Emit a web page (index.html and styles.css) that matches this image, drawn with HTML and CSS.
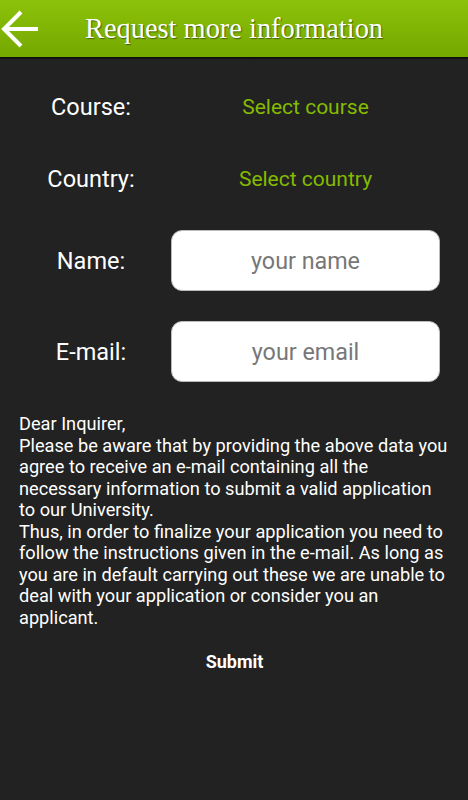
FILE: index.html
```html
<!DOCTYPE html>
<html lang="en">
<head>
    <meta charset="UTF-8">
    <link rel="stylesheet" href="styles.css">
    <title>Request more information</title>
</head>
<body>
    <header class="topbar">
        <a class="back" href="#">
            <svg width="40" height="40" viewBox="0 0 40 40">
                <path d="M38 20 H4 M21 3 L4 20 L21 37" fill="none" stroke="#fff" stroke-width="4"/>
            </svg>
        </a>
        <h1>Request more information</h1>
    </header>
    <main>
        <form class="request">
            <div class="row row-course">
                <label>Course:</label>
                <span class="select">Select course</span>
            </div>
            <div class="row row-country">
                <label>Country:</label>
                <span class="select">Select country</span>
            </div>
            <div class="row row-name">
                <label for="name">Name:</label>
                <input type="text" id="name" placeholder="your name">
            </div>
            <div class="row row-email">
                <label for="email">E-mail:</label>
                <input type="email" id="email" placeholder="your email">
            </div>
            <p class="notice">Dear Inquirer,<br>Please be aware that by providing the above data you agree to receive an e-mail containing all the necessary information to submit a valid application to our University.<br>Thus, in order to finalize your application you need to follow the instructions given in the e-mail. As long as you are in default carrying out these we are unable to deal with your application or consider you an applicant.</p>
            <button type="submit">Submit</button>
        </form>
    </main>
</body>
</html>
```

FILE: styles.css
```css
body {
  margin: 0;
  background: #222222;
  color: #fff;
  font-family: Roboto, "Liberation Sans", sans-serif;
}

.topbar {
  height: 57px;
  display: flex;
  align-items: center;
  background: linear-gradient(#8cc20a, #74a800);
  border-bottom: 2px solid #111;
}

.back {
  display: flex;
  width: 40px;
}

.topbar h1 {
  margin: 0 0 0 45px;
  font-family: "Liberation Serif", serif;
  font-weight: normal;
  font-size: 28.4px;
  color: #fff;
  text-shadow: 1px 1px 1px rgba(0, 0, 0, 0.45);
}

.request {
  padding: 0 10px 0 11px;
}

.row {
  display: grid;
  grid-template-columns: 160px 1fr;
  align-items: center;
  height: 60px;
  margin-right: 18px;
}

.row-course {
  margin-top: 18px;
}

.row-country {
  margin-top: 12px;
}

.row-name {
  margin-top: 21px;
}

.row-email {
  margin-top: 31px;
}

label {
  text-align: center;
  font-size: 23.5px;
}

.select {
  text-align: center;
  font-size: 21px;
  color: #84bb00;
}

input {
  box-sizing: border-box;
  height: 61px;
  width: 100%;
  border: 1px solid #bbb;
  border-radius: 11px;
  background: #fff;
  font-family: Roboto, sans-serif;
  font-size: 23.3px;
  text-align: center;
}

input::placeholder {
  color: #777;
}

.notice {
  margin: 32px 6px 0 8px;
  font-size: 18.2px;
  line-height: 21.5px;
}

button {
  display: block;
  margin: 19px auto 0;
  padding: 4px 12px;
  background: none;
  border: none;
  color: #fff;
  font-family: Roboto, sans-serif;
  font-weight: bold;
  font-size: 18px;
}
```
